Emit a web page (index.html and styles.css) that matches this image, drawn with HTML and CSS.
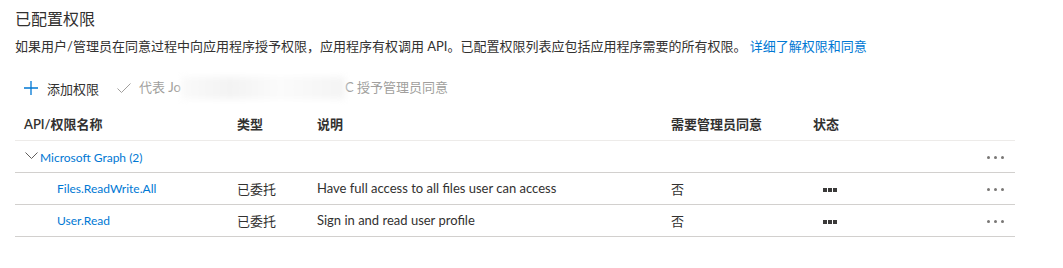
FILE: index.html
```html
<!DOCTYPE html>
<html lang="zh-CN">
<head>
  <meta charset="UTF-8" />
  <title>已配置权限</title>
  <link rel="stylesheet" href="styles.css">
</head>
<body>
  <div class="page">
    <h2 class="title">已配置权限</h2>
    <p class="desc">如果用户/管理员在同意过程中向应用程序授予权限，应用程序有权调用 API。已配置权限列表应包括应用程序需要的所有权限。 <a href="#">详细了解权限和同意</a></p>

    <div class="toolbar">
      <span class="tool">
        <svg width="16" height="16" viewBox="0 0 16 16"><path d="M8 1v14M1 8h14" stroke="#0078d4" stroke-width="1.3" fill="none"/></svg>
        <span>添加权限</span>
      </span>
      <span class="tool disabled">
        <svg width="16" height="16" viewBox="0 0 16 16"><path d="M1.5 8.5l4 4 9-9" stroke="#a19f9d" stroke-width="1" fill="none"/></svg>
        <span>代表 Jo<span class="blur"></span>C 授予管理员同意</span>
      </span>
    </div>

    <table class="perms">
      <thead>
        <tr>
          <th class="c-name">API/权限名称</th>
          <th class="c-type">类型</th>
          <th class="c-desc">说明</th>
          <th class="c-admin">需要管理员同意</th>
          <th class="c-status">状态</th>
          <th class="c-more"></th>
        </tr>
      </thead>
      <tbody>
        <tr class="group">
          <td colspan="5">
            <a href="#" class="group-link">
              <svg width="13" height="8" viewBox="0 0 13 8"><path d="M0.5 0.5l6 6 6-6" stroke="#605e5c" stroke-width="1" fill="none"/></svg>
              Microsoft Graph (2)
            </a>
          </td>
          <td class="c-more"><span class="more"><i></i><i></i><i></i></span></td>
        </tr>
        <tr>
          <td class="c-name perm"><a href="#">Files.ReadWrite.All</a></td>
          <td>已委托</td>
          <td>Have full access to all files user can access</td>
          <td>否</td>
          <td><span class="status"><i></i><i></i><i></i></span></td>
          <td class="c-more"><span class="more"><i></i><i></i><i></i></span></td>
        </tr>
        <tr>
          <td class="c-name perm"><a href="#">User.Read</a></td>
          <td>已委托</td>
          <td>Sign in and read user profile</td>
          <td>否</td>
          <td><span class="status"><i></i><i></i><i></i></span></td>
          <td class="c-more"><span class="more"><i></i><i></i><i></i></span></td>
        </tr>
      </tbody>
    </table>
  </div>
</body>
</html>
```

FILE: styles.css
```css
* {
  box-sizing: border-box;
  margin: 0;
  padding: 0;
}

body {
  font-family: "Segoe UI", Lato, "Noto Sans CJK SC", sans-serif;
  font-size: 13px;
  color: #323130;
  background: #fff;
}

a {
  color: #0078d4;
  text-decoration: none;
}

.page {
  padding: 8px 0 0 15px;
  width: 1015px;
}

.title {
  font-size: 16px;
  font-weight: 400;
  line-height: 22px;
}

.desc {
  margin-top: 6px;
  line-height: 20px;
}

.toolbar {
  display: flex;
  align-items: center;
  height: 32px;
  margin-top: 16px;
  padding-left: 8px;
  gap: 17px;
}

.tool {
  display: flex;
  align-items: center;
  gap: 8px;
}

.tool.disabled {
  color: #a19f9d;
  gap: 7px;
}

.blur {
  display: inline-block;
  width: 164px;
  height: 22px;
  vertical-align: middle;
  background: linear-gradient(90deg, #fafafa, #f3f3f3 30%, #fbfbfb 60%, #f4f4f4);
  filter: blur(3px);
}

.perms {
  width: 1000px;
  margin-top: 4px;
  border-collapse: collapse;
  table-layout: fixed;
}

.perms th,
.perms td {
  height: 32px;
  padding: 0 0 0 9px;
  text-align: left;
  white-space: nowrap;
}

.perms th {
  font-weight: 600;
  border-bottom: 1px solid #edebe9;
}

.perms td {
  border-bottom: 1px solid #d2d0ce;
}

.perms td a {
  font-size: 12px;
}

.c-name { width: 213px; }
.c-type { width: 80px; }
.c-desc { width: 354px; }
.c-admin { width: 142px; }
.c-status { width: 171px; }
.c-more { width: 40px; }

.group-link {
  display: inline-flex;
  align-items: center;
  gap: 2px;
  margin-left: 1px;
}

.group-link svg {
  margin-top: -2px;
}

.perm {
  padding-left: 42px !important;
}

.status {
  display: inline-flex;
  gap: 1px;
  margin-left: 10px;
  vertical-align: middle;
}

.status i {
  width: 4px;
  height: 4px;
  background: #3b3a39;
}

.more {
  display: inline-flex;
  gap: 4px;
  margin-left: 3px;
  vertical-align: middle;
}

.more i {
  width: 3px;
  height: 3px;
  border-radius: 50%;
  background: #797775;
}
```
